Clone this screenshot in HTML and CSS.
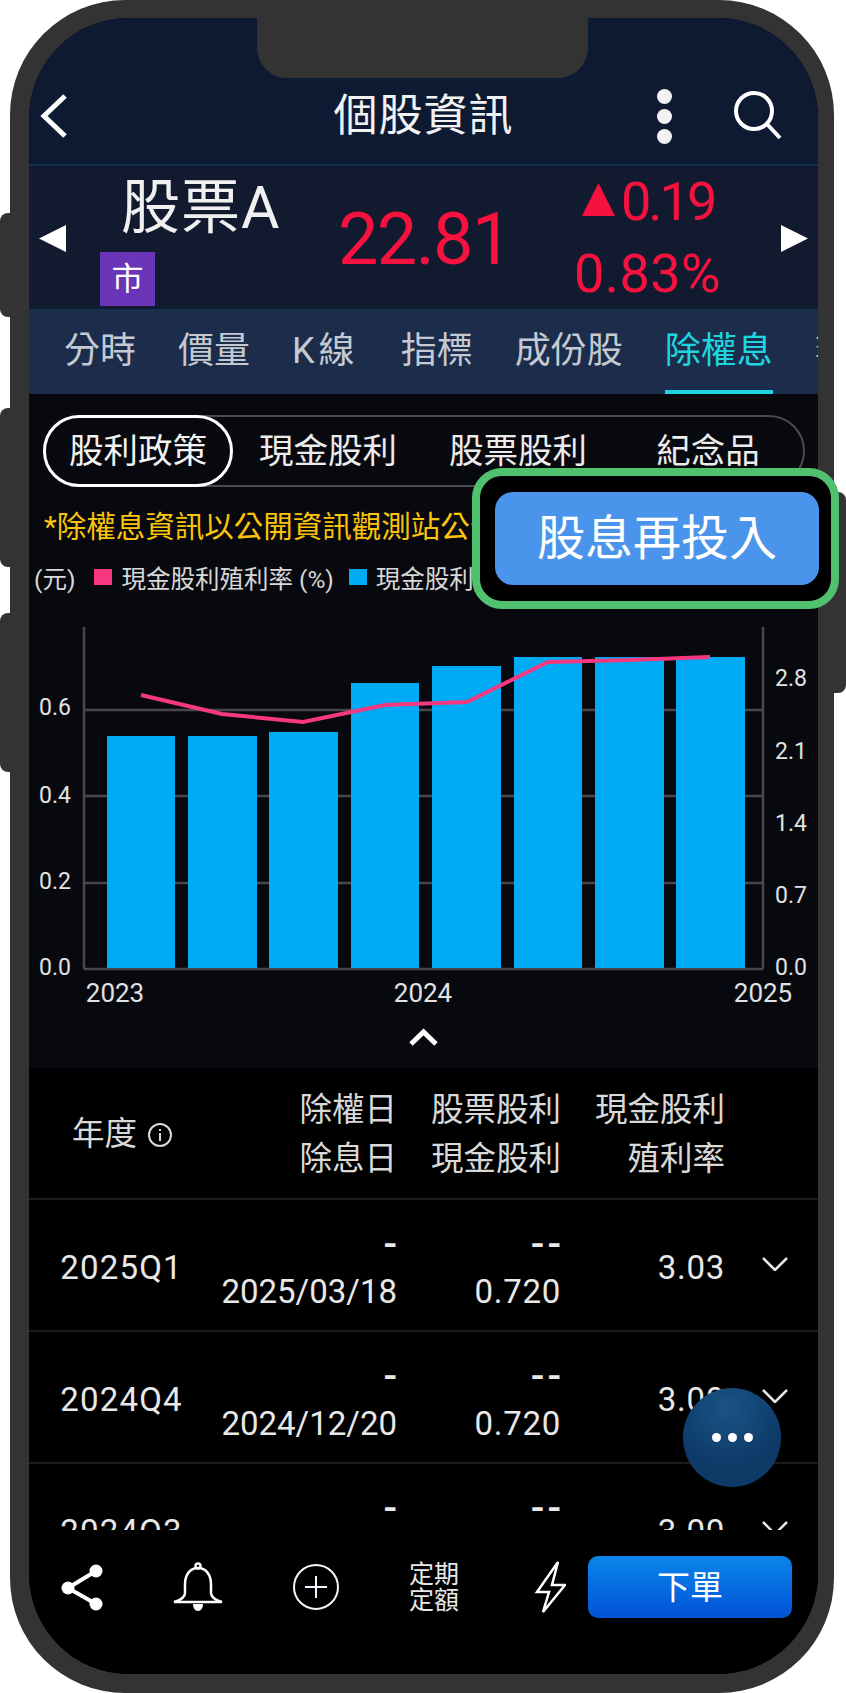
FILE: index.html
```html
<!DOCTYPE html>
<html lang="zh-Hant">
<head>
<meta charset="utf-8">
<title>個股資訊</title>
<link rel="stylesheet" href="styles.css">
</head>
<body>
<div class="phone">
  <span class="side side-l1"></span>
  <span class="side side-l2"></span>
  <span class="side side-l3"></span>
  <span class="side side-r1"></span>
  <div class="screen">
    <span class="notch"></span>
    <header class="topbar">
      <div class="topbar-left">
        <svg class="ico-back" viewBox="0 0 30 46"><polyline points="26,3 5,23 26,43"/></svg>
      </div>
      <h1 class="title">個股資訊</h1>
      <div class="topbar-right">
        <div class="dots"><i></i><i></i><i></i></div>
        <svg class="ico-search" viewBox="0 0 48 50"><circle cx="20" cy="20" r="18"/><line x1="33" y1="33" x2="46" y2="47"/></svg>
      </div>
    </header>
    <section class="quote">
      <svg class="tri" viewBox="0 0 27 27"><polygon points="27,0 27,27 0,13.5"/></svg>
      <div class="quote-name">
        <div class="name">股票A</div>
        <div class="badge">市</div>
      </div>
      <div class="price">22.81</div>
      <div class="change">
        <div class="chg-line chg-up"><svg class="up" viewBox="0 0 33 33"><polygon points="16.5,0 33,33 0,33"/></svg><span>0.19</span></div>
        <div class="chg-line chg-pct">0.83%</div>
      </div>
      <svg class="tri" viewBox="0 0 27 27"><polygon points="0,0 27,13.5 0,27"/></svg>
    </section>
    <nav class="tabs">
      <a class="tab">分時</a><a class="tab">價量</a><a class="tab tab-k">K線</a><a class="tab">指標</a><a class="tab">成份股</a><a class="tab tab-on">除權息</a><a class="tab">籌碼</a>
    </nav>
    <section class="content">
      <div class="pills">
        <div class="pill pill-on">股利政策</div>
        <div class="pill">現金股利</div>
        <div class="pill">股票股利</div>
        <div class="pill">紀念品</div>
      </div>
      <p class="note">*除權息資訊以公開資訊觀測站公告為準</p>
      <div class="legend">
        <span class="unit">(元)</span>
        <i class="sw sw-pink"></i><span class="lg-a">現金股利殖利率 (%)</span>
        <i class="sw sw-blue"></i><span class="lg-b">現金股利</span>
      </div>
      <svg class="chart" viewBox="29 594 789 426">
        <g class="grid">
          <line x1="84" y1="710" x2="763" y2="710"/>
          <line x1="84" y1="796" x2="763" y2="796"/>
          <line x1="84" y1="883" x2="763" y2="883"/>
          <line x1="84" y1="969" x2="763" y2="969"/>
          <line x1="84" y1="627" x2="84" y2="969"/>
          <line x1="763" y1="627" x2="763" y2="969"/>
        </g>
        <g class="bars">
          <rect x="107" y="736" width="68" height="232"/>
          <rect x="188" y="736" width="69" height="232"/>
          <rect x="269" y="732" width="69" height="236"/>
          <rect x="351" y="683" width="68" height="285"/>
          <rect x="432" y="666" width="69" height="302"/>
          <rect x="514" y="657" width="68" height="311"/>
          <rect x="595" y="657" width="69" height="311"/>
          <rect x="676" y="657" width="69" height="311"/>
        </g>
        <polyline class="yield" points="141,695 222,714 303,722 385,705 467,702 548,662 630,660 710,657"/>
        <g class="ax">
          <text x="55" y="707">0.6</text>
          <text x="55" y="795">0.4</text>
          <text x="55" y="881">0.2</text>
          <text x="55" y="967">0.0</text>
          <text x="791" y="678">2.8</text>
          <text x="791" y="751">2.1</text>
          <text x="791" y="823">1.4</text>
          <text x="791" y="895">0.7</text>
          <text x="791" y="967">0.0</text>
          <text class="yr" x="115" y="993">2023</text>
          <text class="yr" x="423" y="993">2024</text>
          <text class="yr" x="763" y="993">2025</text>
        </g>
      </svg>
      <div class="collapse">
        <svg class="ico-up" viewBox="0 0 31 19"><polyline points="3,16 15.5,4 28,16"/></svg>
      </div>
    </section>
    <section class="table">
      <div class="row head">
        <div class="c1 yearhead">年度
          <svg class="ico-info" viewBox="0 0 26 26"><circle cx="13" cy="13" r="11"/><line x1="13" y1="11" x2="13" y2="19"/><line x1="13" y1="7" x2="13" y2="9"/></svg>
        </div>
        <div class="c2">除權日<br>除息日</div>
        <div class="c2">股票股利<br>現金股利</div>
        <div class="c2">現金股利<br>殖利率</div>
        <div></div>
      </div>
      <div class="row">
        <div class="c1">2025Q1</div>
        <div class="c2"><span class="dash">-</span><br><span class="date">2025/03/18</span></div>
        <div class="c2"><span class="dash">--</span><br>0.720</div>
        <div class="c2">3.03</div>
        <svg class="ico-down" viewBox="0 0 26 14"><polyline points="1,1 13,13 25,1"/></svg>
      </div>
      <div class="row">
        <div class="c1">2024Q4</div>
        <div class="c2"><span class="dash">-</span><br><span class="date">2024/12/20</span></div>
        <div class="c2"><span class="dash">--</span><br>0.720</div>
        <div class="c2">3.00</div>
        <svg class="ico-down" viewBox="0 0 26 14"><polyline points="1,1 13,13 25,1"/></svg>
      </div>
      <div class="row">
        <div class="c1">2024Q3</div>
        <div class="c2"><span class="dash">-</span><br><span class="date">2024/09/19</span></div>
        <div class="c2"><span class="dash">--</span><br>0.720</div>
        <div class="c2">3.00</div>
        <svg class="ico-down" viewBox="0 0 26 14"><polyline points="1,1 13,13 25,1"/></svg>
      </div>
    </section>
    <footer class="actions">
      <svg class="ico-share" viewBox="0 0 42 47"><path d="M35 7 7 24l28 16"/><circle cx="35" cy="7" r="6.5"/><circle cx="7" cy="24" r="6.5"/><circle cx="35" cy="40" r="6.5"/></svg>
      <svg class="ico-bell" viewBox="0 0 50 50"><path d="M25 6c-8 0-13 7-13 16v9c0 4-4 7-11 9h48c-7-2-11-5-11-9v-9c0-9-5-16-13-16z"/><circle cx="25" cy="4" r="2.5"/><path class="solid" d="M20 42h10c0 4-2 7-5 7s-5-3-5-7z"/></svg>
      <svg class="ico-plus" viewBox="0 0 46 46"><circle cx="23" cy="23" r="22"/><path d="M12 23h22M23 12v22"/></svg>
      <div class="regular">定期<br>定額</div>
      <svg class="ico-bolt" viewBox="0 0 36 52"><path d="M28 1 7 31h12l-6 20 22-27H22z"/></svg>
      <button class="order">下單</button>
    </footer>
    <div class="fab"><i></i><i></i><i></i></div>
  </div>
  <div class="callout"><div class="callout-btn">股息再投入</div></div>
</div>
</body>
</html>
```
FILE: styles.css
```css
* { box-sizing: border-box; }
html, body { margin: 0; padding: 0; background: #fff; }
body {
  width: 846px;
  height: 1693px;
  overflow: hidden;
  font-family: Roboto, "Noto Sans CJK TC", sans-serif;
  color: #e6e6e6;
}
.phone {
  position: relative;
  margin-left: 10px;
  width: 824px;
  height: 1693px;
  padding: 18px 16px 19px 19px;
  background: #333;
  border-radius: 115px;
}
.side { position: absolute; background: #333; }
.side-l1 { left: -10px; top: 213px; width: 12px; height: 104px; border-radius: 8px 0 0 8px; }
.side-l2 { left: -10px; top: 408px; width: 12px; height: 159px; border-radius: 8px 0 0 8px; }
.side-l3 { left: -10px; top: 613px; width: 12px; height: 159px; border-radius: 8px 0 0 8px; }
.side-r1 { right: -12px; top: 492px; width: 14px; height: 201px; border-radius: 0 8px 8px 0; }

.screen {
  position: relative;
  width: 789px;
  height: 1656px;
  overflow: hidden;
  background: #000;
  border-radius: 100px;
}
.notch {
  position: absolute;
  left: 228px;
  top: 0;
  width: 331px;
  height: 60px;
  background: #333;
  border-radius: 0 0 30px 30px;
}

/* top bar */
.topbar {
  height: 148px;
  padding-top: 50px;
  display: grid;
  grid-template-columns: 1fr auto 1fr;
  align-items: center;
  background: #0e1a32;
  border-bottom: 2px solid #12304a;
}
.title { margin: 0; font-size: 44px; line-height: 1; font-weight: 400; letter-spacing: 1px; color: #f2f2f2; }
.topbar-left { padding-left: 10px; display: flex; }
.ico-back { width: 30px; height: 46px; }
.ico-back polyline { fill: none; stroke: #fff; stroke-width: 5; }
.topbar-right { display: flex; justify-content: flex-end; align-items: center; padding-right: 36px; gap: 62px; }
.dots { display: flex; flex-direction: column; gap: 5px; }
.dots i { width: 15px; height: 15px; border-radius: 50%; background: #f2f2f2; }
.ico-search { width: 48px; height: 50px; }
.ico-search circle, .ico-search line { fill: none; stroke: #fff; stroke-width: 4; }

/* quote */
.quote {
  height: 145px;
  padding: 0 9px 0 10px;
  display: grid;
  grid-template-columns: 27px 272px 238px 205px 27px;
  align-items: center;
  background: #121a30;
  border-bottom: 2px solid #12304a;
}
.tri { width: 27px; height: 27px; }
.tri polygon { fill: #fff; }
.quote-name { align-self: start; padding: 13px 0 0 55px; }
.name { font-size: 59px; line-height: 58px; letter-spacing: 1px; color: #f0f0f0; white-space: nowrap; }
.badge {
  width: 55px;
  height: 54px;
  margin: 15px 0 0 -21px;
  background: #6a35b8;
  color: #fff;
  font-size: 32px;
  line-height: 54px;
  text-align: center;
}
.price { padding-top: 4px; font-size: 72px; line-height: 1; letter-spacing: -1.6px; color: #f6113e; }
.change { color: #f6113e; }
.chg-line { height: 72px; font-size: 54px; line-height: 72px; letter-spacing: -3px; }
.chg-pct { letter-spacing: .4px; margin-left: -2px; }
.chg-up { display: flex; align-items: center; padding-left: 6px; gap: 6px; }
.up { width: 33px; height: 33px; margin-top: -6px; }
.up polygon { fill: #f6113e; }

/* tabs */
.tabs {
  height: 83px;
  padding: 22px 0 0 35px;
  display: flex;
  gap: 42px;
  overflow: hidden;
  background: #1c2c4b;
  white-space: nowrap;
}
.tab { flex: none; height: 61px; font-size: 36px; line-height: 36px; color: #c5cad2; }
.tab-k { letter-spacing: 4px; }
.tab-on { color: #1fd6e0; border-bottom: 4px solid #1fd6e0; }

/* content */
.content { height: 674px; padding-top: 21px; background: #08090f; overflow: hidden; }
.pills {
  margin: 0 13px 0 14px;
  height: 72px;
  display: flex;
  border: 2px solid #4b4b4f;
  border-radius: 36px;
}
.pill {
  flex: 1;
  font-size: 34.5px;
  line-height: 68px;
  text-align: center;
  white-space: nowrap;
  color: #ececec;
}
.pill-on {
  flex: none;
  width: 190px;
  margin: -2px 0 -2px -2px;
  border: 3px solid #fff;
  border-radius: 36px;
  line-height: 66px;
  color: #f2f2f2;
}
.note {
  margin: 23px 0 0;
  padding-left: 15px;
  font-size: 29.5px;
  line-height: 34px;
  color: #fbc408;
  white-space: nowrap;
  overflow: hidden;
}
.legend {
  margin-top: 16px;
  height: 34px;
  padding-left: 5px;
  display: flex;
  align-items: center;
  font-size: 24.5px;
  color: #d8d8d8;
  white-space: nowrap;
}
.sw { width: 18px; height: 16px; margin-right: 9px; }
.unit { margin-right: 19px; }
.sw-pink { background: #f5387f; }
.sw-blue { background: #00aaf5; margin-left: 15px; }
.chart { display: block; width: 789px; height: 426px; }
.grid line { stroke: #47474a; stroke-width: 2.5; }
.bars rect { fill: #00aaf5; }
.yield { fill: none; stroke: #f5387f; stroke-width: 4; }
.ax text { fill: #e2e2e2; font-size: 23px; text-anchor: middle; dominant-baseline: central; }
.ax .yr { font-size: 26px; }
.collapse { height: 48px; padding-top: 8px; display: flex; justify-content: center; }
.ico-up { width: 31px; height: 19px; }
.ico-up polyline { fill: none; stroke: #fff; stroke-width: 5; }

/* table */
.table { height: 462px; overflow: hidden; background: #000; }
.row {
  height: 132px;
  padding-top: 6px;
  display: grid;
  grid-template-columns: 185px 183px 164px 164px 93px;
  align-items: center;
  border-bottom: 2px solid #1b1b1d;
  font-size: 33px;
  line-height: 48px;
  color: #e8e8e8;
}
.head { padding-top: 3px; font-size: 32.5px; line-height: 49px; color: #d9d9d9; }
.c1 { text-align: center; letter-spacing: 1.2px; white-space: nowrap; }
.yearhead { display: flex; justify-content: center; align-items: center; gap: 10px; letter-spacing: 0; padding-left: 2px; }
.c2 { text-align: right; letter-spacing: .7px; white-space: nowrap; }
.head .c2 { letter-spacing: 0; }
.date { letter-spacing: 0; }
.dash { font-size: 40px; font-weight: 500; line-height: 1; letter-spacing: 3px; margin-right: -3px; vertical-align: -3px; }
.ico-info { width: 26px; height: 26px; }
.ico-info circle, .ico-info line { fill: none; stroke: #d9d9d9; stroke-width: 2; }
.ico-down { width: 26px; height: 14px; margin: -8px 0 0 37px; }
.ico-down polyline { fill: none; stroke: #e8e8e8; stroke-width: 2.5; }

/* bottom actions */
.actions {
  height: 144px;
  padding: 26px 0 0 32px;
  display: flex;
  align-items: flex-start;
  gap: 70px;
  background: #000;
}
.actions svg { flex: none; }
.ico-share { width: 42px; height: 47px; margin-top: 8px; }
.ico-share path { fill: none; stroke: #fff; stroke-width: 4; }
.ico-share circle { fill: #fff; }
.ico-bell { width: 50px; height: 50px; margin-top: 6px; }
.ico-bell path, .ico-bell circle { fill: none; stroke: #fff; stroke-width: 2.5; }
.ico-bell .solid { fill: #fff; stroke: none; }
.ico-plus { width: 46px; height: 46px; margin-top: 8px; }
.ico-plus circle, .ico-plus path { fill: none; stroke: #f2f6ff; stroke-width: 2; }
.regular { width: 51px; margin-top: 6px; font-size: 25px; line-height: 26px; color: #e8e8e8; white-space: nowrap; }
.ico-bolt { width: 36px; height: 52px; margin-top: 5px; }
.ico-bolt path { fill: none; stroke: #fff; stroke-width: 2.5; }
.order {
  flex: none;
  width: 204px;
  height: 62px;
  margin-left: -48px;
  padding: 0 0 4px;
  border: 0;
  border-radius: 10px;
  background: linear-gradient(#0a86ea, #0152d6);
  color: #fff;
  font: inherit;
  font-size: 33px;
}

/* floating */
.fab {
  position: absolute;
  left: 654px;
  top: 1370px;
  width: 98px;
  height: 99px;
  border-radius: 50%;
  display: flex;
  justify-content: center;
  align-items: center;
  gap: 7px;
  background: radial-gradient(circle at 45% 20%, #1a5485, #0e3a68 60%);
}
.fab i { width: 9px; height: 9px; border-radius: 50%; background: #fff; }

/* call-out */
.callout {
  position: absolute;
  left: 462px;
  top: 468px;
  width: 367px;
  height: 141px;
  padding: 16px 12px 16px 15px;
  background: #000;
  border: 8px solid #4fc16f;
  border-radius: 30px;
}
.callout-btn {
  height: 100%;
  border-radius: 18px;
  background: #4a94eb;
  color: #fff;
  font-size: 48px;
  line-height: 93px;
  text-align: center;
  white-space: nowrap;
}
```
